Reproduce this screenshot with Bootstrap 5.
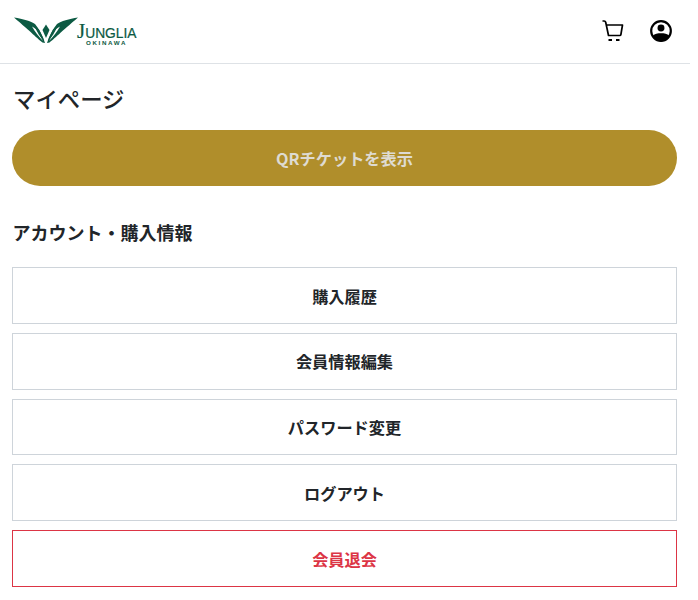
<!DOCTYPE html>
<html lang="ja">
<head>
<meta charset="utf-8">
<link rel="stylesheet" href="https://cdn.jsdelivr.net/npm/bootstrap@5.3.0/dist/css/bootstrap.min.css">
<style>
body{font-family:"Noto Sans CJK JP","Noto Sans",sans-serif;color:#212529;background:#fff}
.page-shell{width:689px}
.site-head{height:64px;border-bottom:1px solid #dee2e6;padding:0 18px 0 14px;width:690px}
.logo-mark{display:block;margin-top:-1px}
.logo-words{color:#0c5a43;line-height:1;margin-left:-3px;margin-top:6px}
.logo-main{font-family:"Liberation Sans",sans-serif;font-size:13.8px;letter-spacing:0;display:block;font-weight:400;white-space:nowrap;-webkit-text-stroke:.2px #0c5a43}
.logo-main b{font-family:"Liberation Serif",serif;font-size:21px;font-weight:400;line-height:.8}
.logo-sub{font-family:"Liberation Sans",sans-serif;font-size:6.2px;font-weight:700;letter-spacing:1.65px;display:block;margin-top:0;padding-left:9px}
.head-icons{gap:26px;margin-top:-1px}
.content-wrap{padding:0 12px}
.page-title{font-size:22.4px;font-weight:500;line-height:1.5;margin:18px 0 14.4px 1px}
.qr-btn{height:56px;border-radius:28px;background:#b08e2b;border:0;color:#dedbd2;font-weight:700;font-size:16.2px;width:100%;opacity:1}
.qr-btn:disabled{background:#b08e2b;color:#dedbd2;opacity:1}
.section-title{font-size:18px;font-weight:700;line-height:1.5;margin:33px 0 21px .5px}
.menu-stack{gap:9px}
.menu-link{height:56.75px;border:1px solid #ced4da;color:#212529;font-weight:700;font-size:16.2px;background:#fff;text-decoration:none;padding-top:1px}
.menu-link.danger{border-color:#dc3545;color:#dc3545}
</style>
</head>
<body>
<div class="page-shell">
<header class="site-head d-flex align-items-center justify-content-between">
  <div class="d-flex align-items-center">
    <svg class="logo-mark" width="66" height="28" viewBox="0 0 66 28" aria-hidden="true">
      <g fill="#0c5a43">
        <path d="M0 0.500 C9 2 17 4 21 7 C25 12 29 19 31 26 L28.500 25.500 C24 22 17 15 0 0.500Z"/>
        <path d="M64 0.500 C55 2 47 4 43 7 C39 12 35 19 33 26 L35.500 25.500 C40 22 47 15 64 0.500Z"/>
        <path d="M18 9.500 C21 11 23 13 24 15 L29 24 C25 20 21 15 18 9.500Z" fill="#fff"/>
        <path d="M46 9.500 C43 11 41 13 40 15 L35 24 C39 20 43 15 46 9.500Z" fill="#fff"/>
        <path d="M21 10 L25 12.500 L29 21 L30 24 C26 20 23 15 21 10Z"/>
        <path d="M43 10 L39 12.500 L35 21 L34 24 C38 20 41 15 43 10Z"/>
        <path d="M32 7.500 L35.500 13 L32 21 L28.500 13Z"/>
      </g>
    </svg>
    <div class="logo-words">
      <span class="logo-main"><b>J</b>UNGLIA</span>
      <span class="logo-sub">OKINAWA</span>
    </div>
  </div>
  <div class="head-icons d-flex align-items-center">
    <svg width="22" height="22" viewBox="0 0 22 22" fill="none" stroke="#000" aria-hidden="true">
      <path d="M0.500 1h1.600c.8 0 1.400.4 1.600 1.200L6.500 15.500h11.300c.6 0 1-.4 1.100-1L20.500 5H4.500" stroke-width="1.700" stroke-linejoin="round"/>
      <path d="M6.500 20h3.500M14 20h3.500" stroke-width="2"/>
    </svg>
    <svg width="22" height="22" viewBox="0 0 24 24" aria-hidden="true">
      <circle cx="12" cy="12" r="10.700" fill="#fff" stroke="#000" stroke-width="2.400"/>
      <circle cx="12" cy="8.800" r="3.800" fill="#000"/>
      <path d="M3 17.500C5 15 8.500 14.500 12 14.500s7 .5 9 3C19 21 15.500 23.500 12 23.500s-7-2.500-9-6Z" fill="#000"/>
    </svg>
  </div>
</header>
<main class="content-wrap">
  <h1 class="page-title">マイページ</h1>
  <button class="btn qr-btn d-flex align-items-center justify-content-center" disabled>QRチケットを表示</button>
  <h2 class="section-title">アカウント・購入情報</h2>
  <nav class="menu-stack d-flex flex-column">
    <a class="menu-link d-flex align-items-center justify-content-center" href="#">購入履歴</a>
    <a class="menu-link d-flex align-items-center justify-content-center" href="#">会員情報編集</a>
    <a class="menu-link d-flex align-items-center justify-content-center" href="#">パスワード変更</a>
    <a class="menu-link d-flex align-items-center justify-content-center" href="#">ログアウト</a>
    <a class="menu-link danger d-flex align-items-center justify-content-center" href="#">会員退会</a>
  </nav>
</main>
</div>
<script src="https://cdn.jsdelivr.net/npm/bootstrap@5.3.0/dist/js/bootstrap.bundle.min.js"></script>
</body>
</html>
